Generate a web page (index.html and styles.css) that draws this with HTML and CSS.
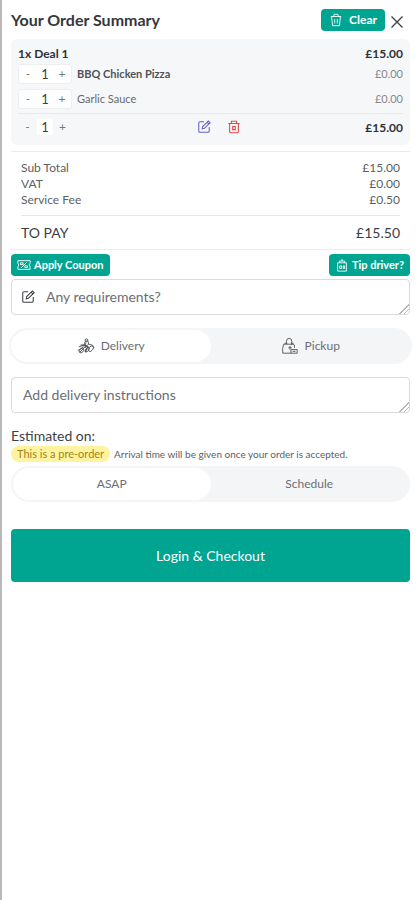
FILE: index.html
```html
<!DOCTYPE html>
<html lang="en">
<head>
<meta charset="utf-8">
<meta name="viewport" content="width=device-width, initial-scale=1">
<title>Your Order Summary</title>
<link rel="stylesheet" href="styles.css">
</head>
<body>
<svg class="sprite" aria-hidden="true">
  <symbol id="trash" viewBox="0 0 16 16"><path d="M2 4h12M5 4l1-2.500h4L11 4M3 4l1 10.500h8L13 4M6.500 7v5M9.500 7v5"/></symbol>
  <symbol id="bin" viewBox="0 0 16 16"><path stroke-width="1.200" d="M1.500 4h13M5 4V1.500h6V4M3 4v9q0 1.500 1.500 1.500h7Q13 14.500 13 13V4M6.500 7.500v3.500h3V7.500z"/></symbol>
  <symbol id="edit" viewBox="0 0 16 16"><path stroke-width="1.200" d="M8 2H3.500Q2 2 2 3.500v9Q2 14 3.500 14h9q1.500 0 1.500-1.500V8M6 10l.5-2.500L13 1l2 2-6.500 6.500zM11.500 2.500l2 2"/></symbol>
  <symbol id="close" viewBox="0 0 16 16"><path stroke-width="1.300" d="M2.500 2.500l11 11M13.500 2.500l-11 11"/></symbol>
  <symbol id="coupon" viewBox="0 0 16 14"><path d="M1 2h14v3q-2 2 0 4v3H1V9q2-2 0-4zM4 4.500h3v2H4zM9 8h3v2H9zM5 10l6-6"/></symbol>
  <symbol id="jar" viewBox="0 0 16 16"><path d="M3 5.500h10V15H3zM5 5.500V3.500h6v2M8 3.500V1M5.500 12V9h2v3zM9.500 12V9h1.500v3z"/></symbol>
  <symbol id="scooter" viewBox="0 0 20 18"><path d="M2 10l6-2 1-4 3-1 1 4 4 1 2 3M1 14l6-4 3 1M3 16l5-5M10 5l-1 5 4-3"/><path stroke-width="1.500" d="M8 8l4 2-3 6M4 8h5"/><ellipse cx="5" cy="14" rx="3" ry="2" transform="rotate(-40 5 14)"/><ellipse cx="15.500" cy="12" rx="3.500" ry="2.200" transform="rotate(-55 15.500 12)"/><ellipse cx="11.500" cy="13" rx="3" ry="1.500" transform="rotate(-55 11.500 13)"/><circle cx="10.500" cy="2.500" r="1.500"/></symbol>
  <symbol id="bag" viewBox="0 0 20 20"><path d="M3 8h10l2 1v3M3 8q-2 5-1 10h16v-4h-7v4M6 8V5q0-3.500 3-3.500T12 5v4M4 7h3M11 7h3M10 10v4M8 12h4M13 16h3"/></symbol>
</svg>
<main class="panel">
  <header class="head">
    <h1>Your Order Summary</h1>
    <button class="btn clear" type="button"><svg><use href="#trash"/></svg>Clear</button>
    <button class="icon close" type="button" aria-label="Close"><svg><use href="#close"/></svg></button>
  </header>

  <section class="card" aria-label="Items">
    <div class="row deal"><h2>1x Deal 1</h2><strong>£15.00</strong></div>
    <div class="row item">
      <div class="stepper boxed"><button type="button" aria-label="Fewer">-</button><output>1</output><button type="button" aria-label="More">+</button></div>
      <span class="name strong">BBQ Chicken Pizza</span><span class="price">£0.00</span>
    </div>
    <div class="row item">
      <div class="stepper boxed"><button type="button" aria-label="Fewer">-</button><output>1</output><button type="button" aria-label="More">+</button></div>
      <span class="name">Garlic Sauce</span><span class="price">£0.00</span>
    </div>
    <div class="row foot">
      <div class="stepper"><button type="button" aria-label="Fewer">-</button><output>1</output><button type="button" aria-label="More">+</button></div>
      <div class="tools">
        <button class="icon edit" type="button" aria-label="Edit"><svg><use href="#edit"/></svg></button>
        <button class="icon delete" type="button" aria-label="Delete"><svg><use href="#bin"/></svg></button>
      </div>
      <strong>£15.00</strong>
    </div>
  </section>

  <section class="totals" aria-label="Totals">
    <dl>
      <div><dt>Sub Total</dt><dd>£15.00</dd></div>
      <div><dt>VAT</dt><dd>£0.00</dd></div>
      <div><dt>Service Fee</dt><dd>£0.50</dd></div>
      <div class="pay"><dt>TO PAY</dt><dd>£15.50</dd></div>
    </dl>
  </section>

  <div class="actions">
    <button class="btn" type="button"><svg><use href="#coupon"/></svg>Apply Coupon</button>
    <button class="btn" type="button"><svg><use href="#jar"/></svg>Tip driver?</button>
  </div>

  <div class="field noted">
    <svg><use href="#edit"/></svg>
    <textarea rows="1" aria-label="Any requirements?" placeholder="Any requirements?"></textarea>
  </div>

  <div class="toggle method">
    <button class="on" type="button" aria-pressed="true"><svg><use href="#scooter"/></svg>Delivery</button>
    <button type="button" aria-pressed="false"><svg><use href="#bag"/></svg>Pickup</button>
  </div>

  <div class="field">
    <textarea rows="1" aria-label="Add delivery instructions" placeholder="Add delivery instructions"></textarea>
  </div>

  <h2 class="when">Estimated on:</h2>
  <p class="note"><mark>This is a pre-order</mark>Arrival time will be given once your order is accepted.</p>
  <div class="toggle">
    <button class="on" type="button" aria-pressed="true">ASAP</button>
    <button type="button" aria-pressed="false">Schedule</button>
  </div>

  <button class="checkout" type="button">Login &amp; Checkout</button>
</main>
</body>
</html>
```

FILE: styles.css
```css
* { box-sizing: border-box; }
body {
  margin: 0;
  background: #fff;
  color: #3c3f44;
  font-family: Lato, "Open Sans", sans-serif;
  font-size: 12px;
  line-height: 16px;
}
button, textarea { font: inherit; color: inherit; }
button { border: 0; padding: 0; background: none; cursor: pointer; }
h1, h2, p, dl, dd { margin: 0; }
svg { fill: none; stroke: currentColor; flex: none; width: 14px; height: 14px; }
.sprite { display: none; }

.panel {
  min-height: 100vh;
  padding: 8px 7px 8px 9px;
  border-left: 2px solid #b9b9b9;
}
.head { display: flex; align-items: center; gap: 4px; height: 24px; padding-right: 5px; }
h1 { flex: 1; font-size: 16px; font-weight: 700; color: #34373b; }
.btn {
  display: flex;
  align-items: center;
  gap: 3px;
  height: 22px;
  padding: 0 6px;
  border-radius: 4px;
  background: #00a592;
  color: #fff;
  font-size: 11px;
  font-weight: 700;
}
.clear { gap: 6px; padding: 0 8px; font-size: 12px; }
.icon { display: grid; place-items: center; }
.close { padding-top: 3px; }
.close svg { width: 16px; height: 16px; }

.card {
  margin-top: 7px;
  padding: 7px;
  border-radius: 6px;
  background: #f6f7f9;
}
.row { display: flex; align-items: center; }
.deal { justify-content: space-between; }
.deal h2, .row strong { font-size: 12px; font-weight: 700; line-height: 15px; color: #303236; }
.item { height: 25px; }
.name { flex: 1; margin-left: 5px; font-size: 11px; color: #66696e; }
.name.strong { font-weight: 700; color: #505358; }
.price { font-size: 11px; color: #85878b; }
.stepper { display: flex; align-items: center; width: 54px; height: 20px; border-radius: 3px; }
.boxed { background: #fff; border: 1px solid #eceff1; }
.stepper button { flex: 1; font-size: 12px; line-height: 16px; color: #777; }
.stepper output { width: 16px; text-align: center; font-size: 13px; background: #fff; }
.foot { margin-top: 2px; padding: 3px 0 1px; border-top: 1px solid #e8e9eb; }
.tools { flex: 1; display: flex; gap: 16px; justify-content: center; }
.edit { color: #6560c4; }
.delete { color: #e04848; }

.totals { margin-top: 6px; padding: 8px 10px; border: solid #ececee; border-width: 1px 0; }
.totals div { display: flex; justify-content: space-between; color: #5c5f64; }
.totals .pay {
  margin-top: 7px;
  padding-top: 9px;
  border-top: 1px solid #e6e7e9;
  font-size: 14px;
  color: #3c3f44;
}
.actions { display: flex; justify-content: space-between; margin-top: 4px; }

.field { display: flex; position: relative; }
.noted { margin-top: 3px; }
.noted svg { position: absolute; left: 10px; top: 11px; }
textarea {
  display: block;
  width: 100%;
  height: 36px;
  padding: 9px 11px;
  border: 1px solid #d8dadd;
  border-radius: 4px;
  background: #fff;
  font-size: 14px;
  outline: 0;
  overflow: hidden;
}
textarea::-webkit-resizer {
  background: linear-gradient(135deg, transparent 66%, #b4b6b9 66% 71%, transparent 71% 81%, #b4b6b9 81% 86%, transparent 86%);
}
.noted textarea { padding-left: 34px; }
textarea::placeholder { color: #6b6e74; opacity: 1; }

.toggle { display: flex; height: 36px; padding: 2px; border-radius: 18px; background: #f4f5f7; }
.toggle button {
  flex: 1;
  display: flex;
  align-items: center;
  justify-content: center;
  gap: 6px;
  border-radius: 16px;
  color: #6b6e74;
}
.toggle .on { background: #fff; }
.method { margin: 13px -2px; }
.method svg { width: 18px; height: 18px; color: #505358; }

.when { margin-top: 15px; font-size: 14px; font-weight: 400; }
.note { display: flex; align-items: center; gap: 4px; height: 20px; margin-bottom: 2px; font-size: 10px; color: #5c5f64; white-space: nowrap; }
mark { padding: 0 6px; border-radius: 8px; background: #fff3a0; color: #a08418; font-size: 11px; }

.checkout {
  display: block;
  width: 100%;
  height: 53px;
  margin-top: 27px;
  border-radius: 4px;
  background: #00a592;
  color: #fff;
  font-size: 14px;
}
```
